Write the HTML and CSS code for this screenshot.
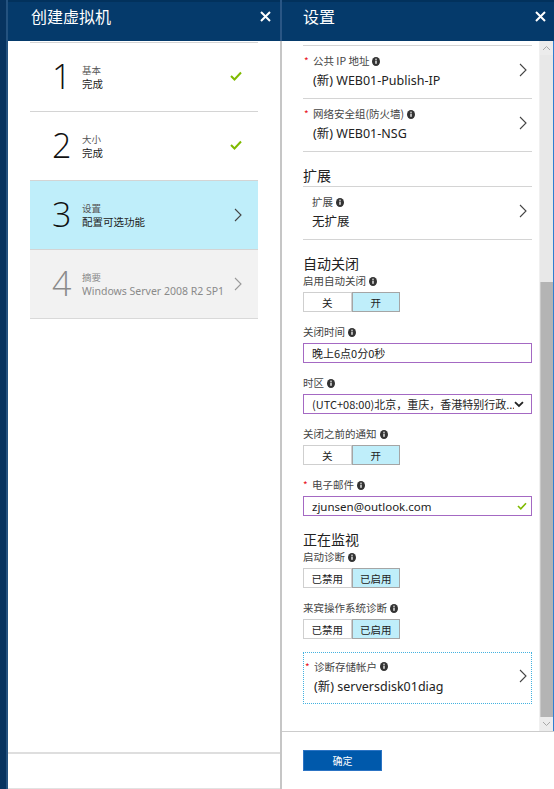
FILE: index.html
```html
<!DOCTYPE html>
<html lang="zh-CN">
<head>
<meta charset="utf-8">
<title>创建虚拟机 - 设置</title>
<link rel="stylesheet" href="styles.css">
</head>
<body>
<div class="page">
  <div class="strip"></div>

  <section class="blade blade-left">
    <header class="blade-head">
      <h1 class="blade-title">创建虚拟机</h1>
      <svg class="close" width="11" height="11" viewBox="0 0 11 11"><path d="M1 1 L10 10 M10 1 L1 10" stroke="#fff" stroke-width="2" fill="none"/></svg>
    </header>
    <div class="blade-body">
      <ol class="steps">
        <li class="step">
          <span class="step-num">1</span>
          <span class="step-text"><span class="step-name">基本</span><span class="step-state">完成</span></span>
          <svg class="check" width="12" height="10" viewBox="0 0 12 10"><path d="M1 5 L4.5 8.5 L11 1.5" stroke="#7fba00" stroke-width="2" fill="none"/></svg>
        </li>
        <li class="step">
          <span class="step-num">2</span>
          <span class="step-text"><span class="step-name">大小</span><span class="step-state">完成</span></span>
          <svg class="check" width="12" height="10" viewBox="0 0 12 10"><path d="M1 5 L4.5 8.5 L11 1.5" stroke="#7fba00" stroke-width="2" fill="none"/></svg>
        </li>
        <li class="step step-active">
          <span class="step-num">3</span>
          <span class="step-text"><span class="step-name">设置</span><span class="step-state">配置可选功能</span></span>
          <svg class="chev" width="8" height="14" viewBox="0 0 8 14"><path d="M1 1 L7 7 L1 13" stroke="#444" stroke-width="1.1" fill="none"/></svg>
        </li>
        <li class="step step-disabled">
          <span class="step-num">4</span>
          <span class="step-text"><span class="step-name">摘要</span><span class="step-state">Windows Server 2008 R2 SP1</span></span>
          <svg class="chev" width="8" height="14" viewBox="0 0 8 14"><path d="M1 1 L7 7 L1 13" stroke="#999" stroke-width="1.1" fill="none"/></svg>
        </li>
      </ol>
    </div>
    <footer class="blade-foot-left"></footer>
  </section>

  <div class="divider"><div class="divider-top"></div><div class="divider-rest"></div></div>

  <section class="blade blade-right">
    <header class="blade-head">
      <h1 class="blade-title">设置</h1>
      <svg class="close" width="11" height="11" viewBox="0 0 11 11"><path d="M1 1 L10 10 M10 1 L1 10" stroke="#fff" stroke-width="2" fill="none"/></svg>
    </header>
    <div class="settings-area">
      <div class="settings">
        <div class="topline"></div>

        <div class="picker">
          <div class="picker-text">
            <div class="field-label"><span class="req">*</span>公共 IP 地址 <svg class="info" width="8" height="9" viewBox="0 0 8 9"><ellipse cx="4" cy="4.5" rx="4" ry="4.5" fill="#333"/><rect x="3.35" y="3.6" width="1.3" height="3.2" fill="#fff"/><circle cx="4" cy="2.3" r="0.75" fill="#fff"/></svg></div>
            <div class="picker-value">(新) WEB01-Publish-IP</div>
          </div>
          <svg class="chev" width="8" height="14" viewBox="0 0 8 14"><path d="M1 1 L7 7 L1 13" stroke="#444" stroke-width="1.1" fill="none"/></svg>
        </div>

        <div class="picker">
          <div class="picker-text">
            <div class="field-label"><span class="req">*</span>网络安全组(防火墙) <svg class="info" width="8" height="9" viewBox="0 0 8 9"><ellipse cx="4" cy="4.5" rx="4" ry="4.5" fill="#333"/><rect x="3.35" y="3.6" width="1.3" height="3.2" fill="#fff"/><circle cx="4" cy="2.3" r="0.75" fill="#fff"/></svg></div>
            <div class="picker-value">(新) WEB01-NSG</div>
          </div>
          <svg class="chev" width="8" height="14" viewBox="0 0 8 14"><path d="M1 1 L7 7 L1 13" stroke="#444" stroke-width="1.1" fill="none"/></svg>
        </div>

        <h2 class="section-head section-head-ruled">扩展</h2>

        <div class="picker">
          <div class="picker-text picker-text-plain">
            <div class="field-label">扩展 <svg class="info" width="8" height="9" viewBox="0 0 8 9"><ellipse cx="4" cy="4.5" rx="4" ry="4.5" fill="#333"/><rect x="3.35" y="3.6" width="1.3" height="3.2" fill="#fff"/><circle cx="4" cy="2.3" r="0.75" fill="#fff"/></svg></div>
            <div class="picker-value">无扩展</div>
          </div>
          <svg class="chev" width="8" height="14" viewBox="0 0 8 14"><path d="M1 1 L7 7 L1 13" stroke="#444" stroke-width="1.1" fill="none"/></svg>
        </div>

        <h2 class="section-head">自动关闭</h2>
        <div class="field field-first">
          <div class="field-label">启用自动关闭 <svg class="info" width="8" height="9" viewBox="0 0 8 9"><ellipse cx="4" cy="4.5" rx="4" ry="4.5" fill="#333"/><rect x="3.35" y="3.6" width="1.3" height="3.2" fill="#fff"/><circle cx="4" cy="2.3" r="0.75" fill="#fff"/></svg></div>
          <div class="toggle"><span class="toggle-opt">关</span><span class="toggle-opt toggle-on">开</span></div>
        </div>

        <div class="field">
          <div class="field-label">关闭时间 <svg class="info" width="8" height="9" viewBox="0 0 8 9"><ellipse cx="4" cy="4.5" rx="4" ry="4.5" fill="#333"/><rect x="3.35" y="3.6" width="1.3" height="3.2" fill="#fff"/><circle cx="4" cy="2.3" r="0.75" fill="#fff"/></svg></div>
          <div class="input">晚上6点0分0秒</div>
        </div>

        <div class="field">
          <div class="field-label">时区 <svg class="info" width="8" height="9" viewBox="0 0 8 9"><ellipse cx="4" cy="4.5" rx="4" ry="4.5" fill="#333"/><rect x="3.35" y="3.6" width="1.3" height="3.2" fill="#fff"/><circle cx="4" cy="2.3" r="0.75" fill="#fff"/></svg></div>
          <div class="input input-select"><span class="input-text">(UTC+08:00)北京，重庆，香港特别行政...</span><svg class="caret" width="10" height="7" viewBox="0 0 10 7"><path d="M1 1 L5 5 L9 1" stroke="#222" stroke-width="1.8" fill="none"/></svg></div>
        </div>

        <div class="field">
          <div class="field-label">关闭之前的通知 <svg class="info" width="8" height="9" viewBox="0 0 8 9"><ellipse cx="4" cy="4.5" rx="4" ry="4.5" fill="#333"/><rect x="3.35" y="3.6" width="1.3" height="3.2" fill="#fff"/><circle cx="4" cy="2.3" r="0.75" fill="#fff"/></svg></div>
          <div class="toggle"><span class="toggle-opt">关</span><span class="toggle-opt toggle-on">开</span></div>
        </div>

        <div class="field">
          <div class="field-label"><span class="req">*</span>电子邮件 <svg class="info" width="8" height="9" viewBox="0 0 8 9"><ellipse cx="4" cy="4.5" rx="4" ry="4.5" fill="#333"/><rect x="3.35" y="3.6" width="1.3" height="3.2" fill="#fff"/><circle cx="4" cy="2.3" r="0.75" fill="#fff"/></svg></div>
          <div class="input input-select"><span class="input-text input-latin">zjunsen@outlook.com</span><svg class="ok" width="10" height="8" viewBox="0 0 10 8"><path d="M1 4 L3.8 6.8 L9 1.2" stroke="#7fba00" stroke-width="1.6" fill="none"/></svg></div>
        </div>

        <h2 class="section-head">正在监视</h2>
        <div class="field field-first">
          <div class="field-label">启动诊断 <svg class="info" width="8" height="9" viewBox="0 0 8 9"><ellipse cx="4" cy="4.5" rx="4" ry="4.5" fill="#333"/><rect x="3.35" y="3.6" width="1.3" height="3.2" fill="#fff"/><circle cx="4" cy="2.3" r="0.75" fill="#fff"/></svg></div>
          <div class="toggle"><span class="toggle-opt">已禁用</span><span class="toggle-opt toggle-on">已启用</span></div>
        </div>

        <div class="field">
          <div class="field-label">来宾操作系统诊断 <svg class="info" width="8" height="9" viewBox="0 0 8 9"><ellipse cx="4" cy="4.5" rx="4" ry="4.5" fill="#333"/><rect x="3.35" y="3.6" width="1.3" height="3.2" fill="#fff"/><circle cx="4" cy="2.3" r="0.75" fill="#fff"/></svg></div>
          <div class="toggle"><span class="toggle-opt">已禁用</span><span class="toggle-opt toggle-on">已启用</span></div>
        </div>

        <div class="picker picker-focus">
          <div class="picker-text">
            <div class="field-label"><span class="req">*</span>诊断存储帐户 <svg class="info" width="8" height="9" viewBox="0 0 8 9"><ellipse cx="4" cy="4.5" rx="4" ry="4.5" fill="#333"/><rect x="3.35" y="3.6" width="1.3" height="3.2" fill="#fff"/><circle cx="4" cy="2.3" r="0.75" fill="#fff"/></svg></div>
            <div class="picker-value">(新) serversdisk01diag</div>
          </div>
          <svg class="chev" width="8" height="14" viewBox="0 0 8 14"><path d="M1 1 L7 7 L1 13" stroke="#444" stroke-width="1.1" fill="none"/></svg>
        </div>
      </div>

      <div class="scrollbar">
        <div class="sb-btn"><svg width="9" height="6" viewBox="0 0 9 6"><path d="M1 5 L4.5 1.5 L8 5" stroke="#a8a8a8" stroke-width="1" fill="none"/></svg></div>
        <div class="sb-track"><div class="sb-thumb"></div></div>
        <div class="sb-btn"><svg width="9" height="6" viewBox="0 0 9 6"><path d="M1 1 L4.5 4.5 L8 1" stroke="#a8a8a8" stroke-width="1" fill="none"/></svg></div>
      </div>
      <div class="edge"></div>
    </div>
    <footer class="blade-foot-right">
      <button class="btn-ok" type="button">确定</button>
    </footer>
  </section>
</div>
</body>
</html>
```

FILE: styles.css
```css
* { box-sizing: border-box; }

html, body {
  margin: 0;
  padding: 0;
}

body {
  width: 554px;
  height: 789px;
  overflow: hidden;
  background: #0a3866;
  font-family: "Noto Sans", "Noto Sans CJK SC", sans-serif;
  color: #222;
}

.page {
  display: flex;
  height: 789px;
}

.strip {
  width: 8px;
  background: #07335f;
  border-right: 2px solid #24527f;
}

.blade {
  width: 272px;
  display: flex;
  flex-direction: column;
  background: #fff;
}

.blade-head {
  height: 41px;
  flex: none;
  background: #053a6b;
  border-top: 2px solid #02315c;
  display: flex;
  align-items: flex-start;
  justify-content: space-between;
  padding: 3px 9px 0 23px;
}

.blade-right .blade-head {
  padding-left: 21px;
  padding-right: 8px;
}

.blade-title {
  margin: 0;
  font-family: "Noto Sans CJK SC", sans-serif;
  font-weight: 400;
  font-size: 16px;
  line-height: 22px;
  color: #fff;
}

.close {
  margin-top: 6px;
}

/* ---------- left blade ---------- */
.blade-body {
  flex: 1;
  padding: 0 22px;
}

.steps {
  list-style: none;
  margin: 0;
  padding: 0;
  border-top: 1px solid #d4d4d4;
  margin-top: 1px;
}

.step {
  height: 69px;
  border-bottom: 1px solid #d4d4d4;
  display: flex;
  align-items: center;
  padding: 0 16px 0 22px;
}

.step-num {
  width: 30px;
  font-family: "Open Sans", "Lato", sans-serif;
  font-weight: 300;
  font-size: 34px;
  line-height: 1;
  color: #111;
  margin-top: -2px;
}

.step-text {
  flex: 1;
  display: flex;
  flex-direction: column;
  font-family: "Noto Sans CJK SC", sans-serif;
}

.step-name {
  font-size: 9.5px;
  line-height: 13px;
  color: #555;
}

.step-state {
  font-size: 10.5px;
  line-height: 14px;
  color: #222;
}

.step .check { margin-top: -3px; }

.step-active {
  background: #bfeefa;
}

.step-disabled {
  background: #f2f2f2;
  border-bottom-color: #d9d9d9;
}

.step-disabled .step-num,
.step-disabled .step-name,
.step-disabled .step-state {
  color: #8a8a8a;
}

.step-disabled .step-state {
  font-family: "Noto Sans", "Noto Sans CJK SC", sans-serif;
  font-size: 10.5px;
  white-space: nowrap;
}

.blade-foot-left {
  height: 37px;
  flex: none;
  border-top: 2px solid #dedede;
  border-bottom: 1px solid #e2e2e2;
}

/* ---------- divider ---------- */
.divider {
  width: 2px;
  display: flex;
  flex-direction: column;
}

.divider-top {
  height: 41px;
  background: #2a5685;
}

.divider-rest {
  flex: 1;
  background: #c6c6c6;
}

/* ---------- right blade ---------- */
.settings-area {
  height: 690px;
  flex: none;
  display: flex;
}

.settings {
  flex: 1;
  overflow: hidden;
  padding: 4px 7px 0 21px;
}

.topline {
  border-top: 1px solid #d4d4d4;
}

.picker {
  display: flex;
  align-items: center;
  border-bottom: 1px solid #d4d4d4;
  padding: 8px 5px 8px 0;
}

.picker-text {
  flex: 1;
}

.picker .field-label {
  padding-left: 1px;
}

.picker-text-plain .field-label,
.picker-text-plain .picker-value {
  padding-left: 9px;
}

.picker .chev { margin-top: -4px; }

.field-label {
  font-family: "Noto Sans CJK SC", sans-serif;
  font-size: 10.5px;
  line-height: 14px;
  color: #444;
  display: flex;
  align-items: center;
  white-space: nowrap;
}

.field-label .info {
  margin-left: 3px;
}

.req {
  color: #e81123;
  font-size: 10px;
  width: 9px;
  display: inline-block;
  line-height: 10px;
}

.picker-value {
  margin-top: 4px;
  padding-left: 10px;
  font-size: 12.5px;
  line-height: 18px;
  color: #222;
}

.section-head {
  margin: 13px 0 0;
  font-family: "Noto Sans CJK SC", sans-serif;
  font-weight: 400;
  font-size: 14px;
  line-height: 20px;
  color: #222;
}

.section-head-ruled {
  padding-bottom: 1px;
  border-bottom: 1px solid #d4d4d4;
}

.field {
  margin-top: 13px;
  display: flex;
  flex-direction: column;
  gap: 4px;
}

.field-first {
  margin-top: 1px;
}

.toggle {
  display: flex;
  width: 97px;
  height: 20px;
}

.toggle-opt {
  flex: 1;
  display: flex;
  align-items: center;
  justify-content: center;
  font-family: "Noto Sans CJK SC", sans-serif;
  font-size: 10.5px;
  color: #222;
  border: 1px solid #cfcfcf;
  background: #fff;
}

.toggle-opt + .toggle-opt {
  border-left: none;
}

.toggle-on {
  background: #bfeefa;
  border-color: #a5a5a5;
  border-left: 1px solid #a5a5a5 !important;
}

.input {
  height: 20px;
  border: 1px solid #a469c3;
  display: flex;
  align-items: center;
  padding: 0 7px 0 8px;
  font-family: "Noto Sans CJK SC", sans-serif;
  font-size: 11px;
  color: #222;
}

.input-select {
  justify-content: space-between;
}

.input-text {
  white-space: nowrap;
  overflow: hidden;
}

.input-latin {
  font-family: "Noto Sans", "Noto Sans CJK SC", sans-serif;
  font-size: 11.5px;
}

.ok { margin-right: -3px; }

.picker-focus {
  margin-top: 13px;
  border: 1px dotted #43b2e0;
  padding: 7px 4px 8px 0;
  height: 52px;
}

/* ---------- scrollbar ---------- */
.scrollbar {
  width: 14px;
  display: flex;
  flex-direction: column;
  background: #e8e8e8;
  border-left: 1px solid #f0f0f0;
}

.sb-btn {
  height: 14px;
  display: flex;
  align-items: center;
  justify-content: center;
  background: #ececec;
}

.sb-track {
  flex: 1;
  display: flex;
  flex-direction: column;
}

.sb-thumb {
  margin-top: 227px;
  flex: 1;
  background: #b4b4b4;
  border-left: 1px solid #c9c9c9;
}

.edge {
  width: 1px;
  background: #2e7fd1;
}

.blade-foot-right {
  flex: 1;
  border-top: 1px solid #cccccc;
  padding: 18px 0 0 21px;
}

.btn-ok {
  width: 79px;
  height: 21px;
  border: 1px solid #2c74c4;
  background: #0059ab;
  color: #fff;
  font-family: "Noto Sans CJK SC", sans-serif;
  font-size: 10px;
  padding: 0;
  display: block;
}
```
